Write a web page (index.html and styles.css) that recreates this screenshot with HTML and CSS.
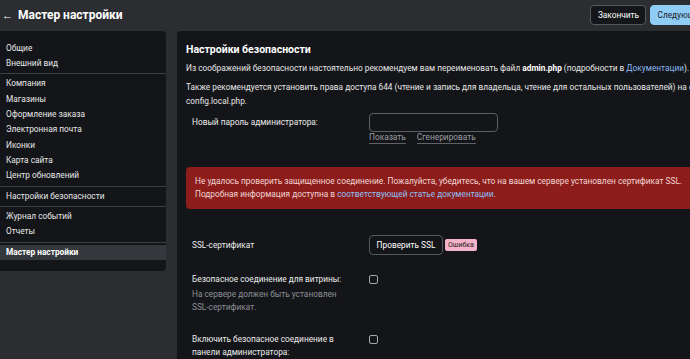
FILE: index.html
```html
<!DOCTYPE html>
<html lang="ru">
<head>
  <meta charset="UTF-8">
  <title>Мастер настройки</title>
  <link rel="stylesheet" href="styles.css">
</head>
<body>
  <div class="page">
    <div class="topbar">
      <div class="title"><span class="back">&#8592;</span>Мастер настройки</div>
      <div class="actions">
        <button class="btn-finish">Закончить</button>
        <button class="btn-next">Следующий шаг</button>
      </div>
    </div>

    <div class="main">
      <!-- Settings menu -->
      <div class="sidebar">
        <div class="group first">
          <div class="item">Общие</div>
          <div class="item">Внешний вид</div>
        </div>
        <div class="group">
          <div class="item">Компания</div>
          <div class="item">Магазины</div>
          <div class="item">Оформление заказа</div>
          <div class="item">Электронная почта</div>
          <div class="item">Иконки</div>
          <div class="item">Карта сайта</div>
          <div class="item">Центр обновлений</div>
        </div>
        <div class="group">
          <div class="item">Настройки безопасности</div>
        </div>
        <div class="group">
          <div class="item">Журнал событий</div>
          <div class="item">Отчеты</div>
        </div>
        <div class="group last">
          <div class="item active">Мастер настройки</div>
        </div>
      </div>

      <!-- Security step -->
      <div class="content">
        <h2>Настройки безопасности</h2>
        <p class="p1">Из соображений безопасности настоятельно рекомендуем вам переименовать файл <b>admin.php</b> (подробности в <a href="#">Документации</a>).</p>
        <p class="p2">Также рекомендуется установить права доступа 644 (чтение и запись для владельца, чтение для остальных пользователей) на файл config.local.php.</p>

        <div class="row pass-row">
          <div class="label">Новый пароль администратора:</div>
          <div class="field">
            <input type="text" class="input">
            <div class="links"><a href="#">Показать</a><a href="#">Сгенерировать</a></div>
          </div>
        </div>

        <div class="alert">
          Не удалось проверить защищенное соединение. Пожалуйста, убедитесь, что на вашем сервере установлен сертификат SSL.<br>
          Подробная информация доступна в <a href="#">соответствующей статье документации</a>.
        </div>

        <div class="row ssl-row">
          <div class="label">SSL-сертификат</div>
          <div class="field inline">
            <button class="btn-check">Проверить SSL</button>
            <span class="badge">Ошибка</span>
          </div>
        </div>

        <div class="row store-row">
          <div class="label">
            <div class="text">Безопасное соединение для витрины:</div>
            <div class="hint">На сервере должен быть установлен SSL-сертификат.</div>
          </div>
          <div class="field"><span class="check"></span></div>
        </div>

        <div class="row admin-row">
          <div class="label">
            <div class="text">Включить безопасное соединение в панели администратора:</div>
          </div>
          <div class="field"><span class="check"></span></div>
        </div>
      </div>
    </div>
  </div>
</body>
</html>
```

FILE: styles.css
```css
body {
  margin: 0;
  background: #2b2d31;
  color: #e6e6e6;
  font-family: Roboto, "Liberation Sans", sans-serif;
  font-size: 8.3px;
  overflow: hidden;
  height: 359px;
}

.page {
  width: 740px;
}

.topbar {
  height: 30px;
  display: flex;
  align-items: center;
  justify-content: space-between;
  padding: 0 12px 0 2px;
}

.title {
  font-size: 12px;
  font-weight: bold;
  color: #fff;
  white-space: nowrap;
  display: flex;
  align-items: center;
}

.back {
  font-weight: normal;
  font-size: 11px;
  width: 16px;
}

.actions {
  display: flex;
  gap: 4px;
}

.btn-finish,
.btn-next {
  font-family: inherit;
  font-size: 8.3px;
  height: 20px;
  padding: 0 6px;
  border-radius: 4px;
  cursor: pointer;
}

.btn-finish {
  width: 56px;
  background: #141619;
  color: #fff;
  border: 1px solid #55585d;
}

.btn-next {
  background: #8fcdf6;
  color: #1a1c1f;
  border: 1px solid #8fcdf6;
}

.main {
  display: flex;
  gap: 11px;
  margin-top: 1px;
}

/* menu on the left */
.sidebar {
  width: 166px;
  flex-shrink: 0;
  display: flex;
  flex-direction: column;
  gap: 1px;
  background: #3a3d41;
  border-radius: 0 4px 4px 0;
  overflow: hidden;
  align-self: flex-start;
}

.group {
  background: #131518;
  padding: 2px 0;
}

.group.first {
  padding-top: 9.6px;
}

.group.last {
  padding: 2px 0 11px;
}

.item {
  padding: 0 6px;
  height: 15.35px;
  line-height: 15.35px;
  color: #e8e8e8;
  white-space: nowrap;
}

.item.active {
  background: #34373b;
  font-weight: bold;
  color: #fff;
}

/* main panel */
.content {
  width: 554px;
  flex-shrink: 0;
  background: #131518;
  border-radius: 4px 0 0 0;
  padding: 12px 0 0 9px;
  height: 316px;
  overflow: hidden;
}

h2 {
  font-size: 10.5px;
  line-height: 14px;
  font-weight: bold;
  color: #fff;
  margin: 0 0 4px;
}

p {
  margin: 0;
  line-height: 14px;
  color: #e6e6e6;
  width: 540px;
}

.p2 {
  margin-top: 5px;
}

p b {
  color: #fff;
}

a {
  color: #8ab8f0;
  text-decoration: none;
}

.row {
  display: flex;
  padding-left: 6px;
}

.label {
  width: 177px;
  flex-shrink: 0;
  color: #ececec;
  line-height: 13px;
}

.label .text,
.hint {
  width: 158px;
}

.pass-row {
  margin-top: 5px;
}

.pass-row .label {
  padding-top: 2.5px;
}

.input {
  display: block;
  box-sizing: border-box;
  width: 129px;
  height: 19px;
  background: #131518;
  border: 1px solid #5c5f64;
  border-radius: 4px;
  margin: 0;
}

.links {
  display: flex;
  gap: 11px;
  height: 12px;
}

.links a {
  color: #9a9da2;
  border-bottom: 1px solid #5f6267;
  line-height: 11px;
}

.alert {
  background: #8c1d1b;
  color: #f2d6d4;
  line-height: 13px;
  padding: 8px 9px;
  margin-top: 23px;
  width: 540px;
  border-radius: 4px 0 0 4px;
  white-space: nowrap;
}

.alert a {
  color: #8fc0f5;
}

.ssl-row {
  margin-top: 26px;
  align-items: center;
}

.inline {
  display: flex;
  align-items: center;
  gap: 2px;
}

.btn-check {
  font-family: inherit;
  font-size: 8.3px;
  width: 74px;
  height: 20px;
  padding: 0;
  background: #131518;
  color: #fff;
  border: 1px solid #55585d;
  border-radius: 4px;
}

.badge {
  background: #f5b3c9;
  color: #1a1a1a;
  font-size: 7px;
  padding: 2px 3px;
  border-radius: 2px;
  line-height: 8px;
}

.store-row {
  margin-top: 18px;
}

.hint {
  color: #8d9095;
  margin-top: 2px;
}

.admin-row {
  margin-top: 19px;
}

.check {
  display: block;
  box-sizing: border-box;
  width: 9px;
  height: 9px;
  border: 1.5px solid #a3a6ab;
  border-radius: 2px;
  margin-top: 2px;
}
```
